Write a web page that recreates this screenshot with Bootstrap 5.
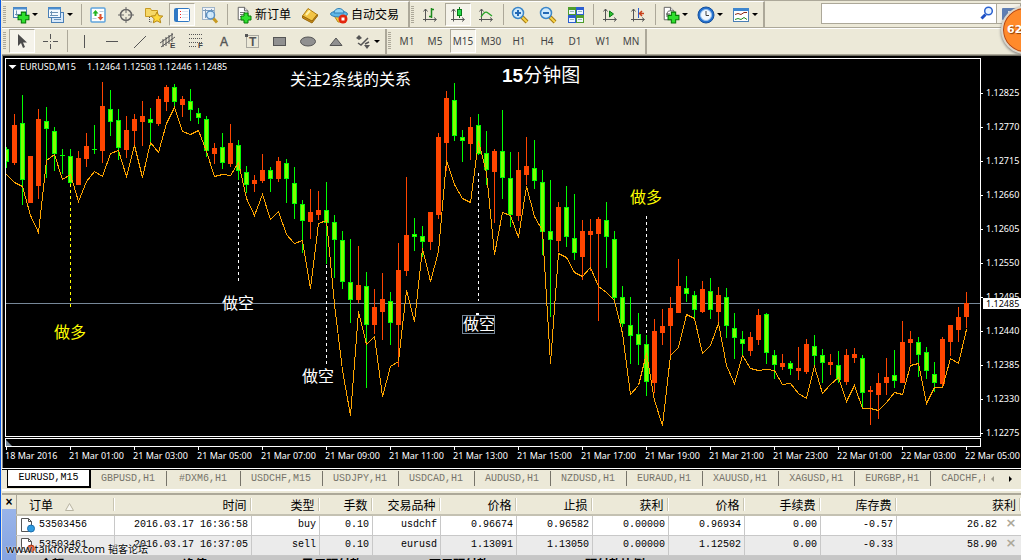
<!DOCTYPE html>
<html lang="zh-CN">
<head>
<meta charset="utf-8">
<meta name="viewport" content="width=device-width, initial-scale=1">
<title>EURUSD,M15</title>
<link rel="stylesheet" href="https://cdn.jsdelivr.net/npm/bootstrap@5.3.0/dist/css/bootstrap.min.css">
<style>
:root{--face:#ece9d8;--shade:#aca899;--cjk:"Noto Sans CJK SC";}
body{background:var(--face);border-left:1px solid #0a5ae6;padding-left:1px;color:#000;font:12px/16px "Liberation Sans",var(--cjk),sans-serif;}
button{background:none;border:0;padding:0;color:inherit;}
svg{display:block;flex:none;}
/* toolbars */
.toolrow{height:26px;}
.toolrow.first{height:28px;border-top:1px solid var(--shade);border-bottom:1px solid var(--shade);box-shadow:0 1px 0 #fff;position:relative;}
.toolgroup{border-right:2px solid var(--shade);}
.first .toolgroup{border-top:1px solid #fff;}
.grip{width:3px;margin:4px 2px 4px 1px;background:repeating-linear-gradient(#aca899 0 1px,transparent 1px 2px);}
.divide{width:1px;margin:2px 2px 2px 3px;background:var(--shade);}
.tool{width:28px;display:flex;align-items:center;justify-content:center;}
.tool.drop{width:35px;padding-left:4px;gap:2px;justify-content:flex-start;}
.tool.wide{width:auto;padding:0 5px 0 6px;gap:3px;white-space:nowrap;font-size:12px;}
.tool.drop::after{content:"";border:3px solid transparent;border-top:3px solid #000;border-bottom:0;}
.tool.down{margin:1px;width:26px;border:1px solid #fff;border-top-color:var(--shade);border-left-color:var(--shade);background:#f5f3ea;}
.frame-time{font:10px/16px "Noto Sans",sans-serif;color:#444;}
.search{height:21px;margin-top:2px;width:200px;}
.search input{width:176px;border:1px solid var(--shade);border-radius:0;padding:0 24px 0 4px;font-size:12px;min-height:0;}
.search .find{right:27px;top:3px;}
.search .chat{border:1px solid var(--shade);border-left:0;width:24px;background:#f4f2e8;}
.bubble{right:-28px;top:6px;width:48px;height:48px;border-radius:50%;background:#ff8a2b;border:2px solid #d9d5cc;box-shadow:inset 0 0 0 1px #b0471a,0 1px 3px #777;color:#fff;font:bold 11px/44px "DejaVu Sans",sans-serif;padding-left:4px;text-shadow:1px 1px 1px #8d3c00;}
/* chart */
.chartwin{background:#000;color:#fff;border-top:1px solid #716f64;border-left:1px solid #858585;padding:2px 0 0 2px;font:9px/10px "Noto Sans",sans-serif;box-shadow:0 -1px 0 var(--shade);margin-top:1px;}
.plot{height:379px;border:1px solid #fff;}
.strip{height:9px;border:1px solid #fff;margin-top:1px;}
.strip::before{content:"";display:block;width:0;border:3px solid transparent;border-left-color:#778899;border-bottom-color:#778899;margin-top:1px;}
.prices{width:40px;padding-top:30px;gap:24px;}
.prices span{display:flex;align-items:center;gap:3px;height:10px;}
.prices span::before{content:"";width:2px;height:1px;background:#fff;}
.prices .now{top:240px;left:2px;right:0;height:11px;background:#fff;color:#000;padding-left:3px;}
.prices .now::before{display:none;}
.times{height:21px;}
.times span{width:64px;flex:none;white-space:nowrap;line-height:12px;}
.times span::before{content:"";display:block;width:1px;height:3px;margin-left:1px;background:#fff;}
.candles{shape-rendering:crispEdges;}
.note{font:16px var(--cjk),sans-serif;fill:#fff;}
.headline{font-size:19px;}
.headline .digits{font-family:"Liberation Sans",sans-serif;font-weight:bold;}
/* chart tabs */
.charttabs{height:22px;border-top:1px solid #000;box-shadow:0 -1px 0 #fff;margin-top:1px;border-bottom:2px solid #fff;padding-left:5px;font:10px/16px "Liberation Mono",monospace;}
.charttabs button{height:15px;min-width:74px;padding:0 11px 0 10px;border-right:1px solid #77746a;color:#77746a;flex:none;margin-top:1px;white-space:nowrap;}
.charttabs button.active{height:19px;margin:-1px 0 0;background:#fff;color:#000;border:1px solid #000;border-width:0 2px 2px 1px;width:84px;padding:0 10px;}
.charttabs .arrow{min-width:0;padding:0 5px;border:0;width:18px;}
/* terminal */
.terminal{margin-top:2px;border-top:2px solid var(--shade);}
.side{width:14px;background:linear-gradient(#9fb9ec,#7f9fdf);}
.side button{display:block;width:14px;height:14px;background:var(--face);font:bold 12px/10px "Liberation Sans",sans-serif;}
.orders{width:100%;table-layout:fixed;border-left:1px solid var(--shade);font:10px/16px "Liberation Mono",monospace;}
.orders .c-id{width:98px}.orders .c-time{width:137px}.orders .c-68{width:68px}.orders .c-53{width:53px}.orders .c-76{width:76px}
.orders th{height:20px;padding:0 5px;font:12px/16px var(--cjk),sans-serif;text-align:right;background:linear-gradient(90deg,transparent 0 calc(100% - 2px),#c9c5b2 0 calc(100% - 1px),#fff 0) center/100% 13px no-repeat;border-bottom:2px solid #c4c1b2;}
.orders td{height:20px;padding:0 3px;text-align:right;border-right:1px solid #c8c8c8;border-bottom:1px solid #c8c8c8;background:#fff;}
.orders tr.alt td{background:#ebebeb;}
.orders th:first-child{text-align:left;padding-left:12px;}
.orders td:first-child{text-align:left;}
.orders td:last-child,.orders th:last-child{border-right:0;}
.shut{color:#aca899;font:bold 13px/12px "DejaVu Sans",sans-serif;margin-left:7px;width:14px;}
.total{background:#c6c6c6;font:bold 12px/16px var(--cjk),sans-serif;padding:0 0 0 24px;white-space:nowrap;height:18px;}
.total span{flex:none;width:127px;}
.total .t-a{width:143px}.total .t-b{width:119px}.total .t-d{width:156px}
.brandmark{left:5px;bottom:4px;font:11px/14px "Noto Sans",sans-serif;color:#000;text-shadow:0 0 1px #fff,0 0 2px #fff;}
.brandmark small{font:10px/14px var(--cjk),sans-serif;}
</style>
<script src="https://cdn.jsdelivr.net/npm/bootstrap@5.3.0/dist/js/bootstrap.bundle.min.js"></script>
</head>
<body class="vh-100 overflow-hidden position-relative">
<svg width="0" height="0" class="position-absolute" aria-hidden="true">
<defs>
<symbol id="plus" viewBox="0 0 12 12"><path d="M4 1h4v3h3v4H8v3H4V8H1V4h3z" fill="#2fe02f" stroke="#067a06"/></symbol>
<symbol id="axes" viewBox="0 0 18 18"><path d="M4.500 3v12.500M2 13.500h13M2.500 5.500l2-2.500 2 2.500M13 11.500l2.500 2-2.500 2" fill="none" stroke="#555"/></symbol>
<symbol id="lens" viewBox="0 0 18 18"><path d="M11 11l5 5" stroke="#a87a10" stroke-width="4"/><path d="M11 11l5 5" stroke="#f6d44a" stroke-width="2"/><circle cx="7" cy="7" r="5.500" fill="#cfeafc" stroke="#3b86c8" stroke-width="1.500"/></symbol>
<symbol id="sheet" viewBox="0 0 18 18"><path d="M2.500 1.500h7l4 4v10h-11z" fill="#fff" stroke="#555"/><path d="M9.500 1.500v4h4" fill="#ddd" stroke="#555"/></symbol>
</defs></svg>

<header>
<div class="toolrow first d-flex">
  <div class="toolgroup d-flex">
    <i class="grip"></i>
    <button class="tool drop" title="新图表"><svg width="18" height="18"><rect x="1.500" y="1.500" width="13" height="10" fill="#f4faff" stroke="#4a7fb5"/><path d="M1 2.500h14" stroke="#4a8fd0" stroke-width="2"/><path d="M4.500 4.500v5M3 8.500h8" stroke="#6d93b5" fill="none"/><use href="#plus" x="5" y="5" width="13" height="13"/></svg></button>
    <button class="tool drop" title="配置文件"><svg width="18" height="18"><rect x="4.500" y="6.500" width="12" height="10" fill="#d7e9fb" stroke="#4a7fb5"/><rect x="1.500" y="1.500" width="12" height="10" fill="#f4faff" stroke="#4a7fb5"/><path d="M1 2.500h13" stroke="#4a8fd0" stroke-width="2"/><path d="M3 6.500h8M4.500 5v5M3 9.500h8M7 13.500h7" stroke="#6d93b5"/></svg></button>
    <i class="divide"></i>
    <button class="tool" title="市场报价"><svg width="18" height="18"><rect x="2" y="2" width="14" height="14" rx="1" fill="#fff" stroke="#5fa4dc" stroke-width="1.500"/><path d="M3.500 7.500l3-3.500 3 3.500H7.500V10h-2V7.500z" fill="#23b423"/><path d="M8.500 11l3 3.500 3-3.500h-2V8h-2v3z" fill="#e0502a"/><path d="M10.500 5.500h4M3.500 12.500h4" stroke="#bcd"/></svg></button>
    <button class="tool" title="数据窗口"><svg width="18" height="18" fill="none" stroke="#666"><circle cx="9" cy="9" r="5.500" stroke-width="1.500"/><path d="M9 1v6M9 11v6M1 9h6M11 9h6"/></svg></button>
    <button class="tool" title="导航"><svg width="20" height="18"><path d="M1.500 2.500h5l1 2h6v6h-12z" fill="#f6d867" stroke="#c79a22"/><path d="M5.500 11v5h3" stroke="#555" stroke-dasharray="1 1" fill="none"/><path d="M13 6l1.800 3.700 4 .4-3 2.700.9 4-3.700-2-3.700 2 .9-4-3-2.700 4-.4z" fill="#ffd93b" stroke="#b58613"/></svg></button>
    <button class="tool down" title="终端"><svg width="18" height="18"><rect x="1.500" y="2.500" width="15" height="13" rx="1" fill="#fff" stroke="#2f78c4"/><path d="M3.500 3v12" stroke="#2f78c4" stroke-width="3"/><path d="M7.500 5v9" stroke="#e22" stroke-dasharray="1 2"/><path d="M9 5.500h6M9 8.500h6M9 11.500h6" stroke="#dbe6f2"/></svg></button>
    <button class="tool" title="策略测试"><svg width="18" height="18"><rect x="1.500" y="1.500" width="12" height="12" fill="#eef3f8" stroke="#9fb4c8"/><path d="M4.500 3v9M10.500 3v9M2 4.500h11" stroke="#7d9cba"/><path d="M12 12l4 4.500" stroke="#c79a22" stroke-width="3"/><circle cx="9.500" cy="9" r="4" fill="#cfeafc" fill-opacity=".9" stroke="#5b8fc0" stroke-width="1.500"/></svg></button>
    <i class="divide"></i>
    <button class="tool wide"><svg width="16" height="18"><use href="#sheet" width="16" height="16"/><path d="M4 6.500h5M4 8.500h7M4 10.500h4" stroke="#777"/><use href="#plus" x="4" y="6" width="12" height="12"/></svg>新订单</button>
    <button class="tool" title="MetaEditor"><svg width="18" height="18"><path d="M1.500 10L7 2.500l9 6-5 7z" fill="#f2c445" stroke="#b07d12"/><path d="M1.500 10v2l9.500 5 5.500-7V8.500l-5.500 6.500z" fill="#c98c18" stroke="#9a6a0c"/><path d="M5 9l4-4.500" stroke="#fff2a8" stroke-width="2"/></svg></button>
    <button class="tool wide"><svg width="18" height="18"><path d="M3 8l5 8h7l2-8z" fill="#f3c93f" stroke="#b78b18"/><ellipse cx="9" cy="8" rx="8.500" ry="3" fill="#5db6e6" stroke="#2f7fb5"/><path d="M4 7c0-6 10-6 10 0z" fill="#8fd3f5" stroke="#2f7fb5"/><circle cx="13" cy="13" r="4.500" fill="#e3260f"/><rect x="11.500" y="11.500" width="3" height="3" fill="#fff"/></svg>自动交易</button>
    <i class="ps-1"></i>
  </div>
  <div class="toolgroup d-flex">
    <i class="grip"></i>
    <button class="tool" title="柱状图"><svg width="18" height="18"><use href="#axes" width="18" height="18"/><path d="M10.500 2v10M10 3.500h3M8 10.500h3" stroke="#1d8a1d" fill="none" stroke-width="1.500"/></svg></button>
    <button class="tool down" title="阴阳烛"><svg width="18" height="18"><use href="#axes" width="18" height="18"/><path d="M10.500 1v11" stroke="#0a7a1a"/><rect x="8.500" y="3.500" width="4" height="6" fill="#27d84a" stroke="#0a7a1a"/></svg></button>
    <button class="tool" title="折线图"><svg width="18" height="18"><use href="#axes" width="18" height="18"/><path d="M4 11c3-5 5-6 7-4l4 3" stroke="#2ba52b" fill="none" stroke-width="1.300"/></svg></button>
    <i class="divide"></i>
    <button class="tool" title="放大"><svg width="18" height="18"><use href="#lens" width="18" height="18"/><path d="M4 7h6M7 4v6" stroke="#2369b5" stroke-width="2"/></svg></button>
    <button class="tool" title="缩小"><svg width="18" height="18"><use href="#lens" width="18" height="18"/><path d="M4 7h6" stroke="#2369b5" stroke-width="2"/></svg></button>
    <button class="tool" title="平铺"><svg width="18" height="18"><path d="M1 1h8v8H1z" fill="#4f9e2c"/><path d="M9 1h8v8H9z" fill="#2c5fd0"/><path d="M1 9h8v8H1z" fill="#2c5fd0"/><path d="M9 9h8v8H9z" fill="#4f9e2c"/><path d="M2 4h6v4H2zM10 4h6v4h-6zM2 12h6v4H2zM10 12h6v4h-6z" fill="#eef6ff"/><path d="M3 5.500h4M11 5.500h4M3 13.500h4M11 13.500h4" stroke="#9bb"/></svg></button>
    <i class="divide"></i>
    <button class="tool" title="自动滚动"><svg width="18" height="18"><use href="#axes" width="18" height="18"/><path d="M8.500 5l4 3-4 3z" fill="#2fc02f" stroke="#0a7a1a"/></svg></button>
    <button class="tool" title="图表平移"><svg width="18" height="18"><use href="#axes" width="18" height="18"/><path d="M9.500 2v10" stroke="#2c5fd0"/><path d="M15 7.500h-4M13 5l-2.500 2.500L13 10" stroke="#c8401a" fill="none" stroke-width="1.500"/></svg></button>
    <i class="divide"></i>
    <button class="tool drop" title="指标"><svg width="18" height="18"><use href="#sheet" width="16" height="16"/><path d="M5 11c0-6 1-6 3-6M4 8h4" stroke="#555" fill="none"/><use href="#plus" x="5" y="5" width="13" height="13"/></svg></button>
    <button class="tool drop" title="时间周期"><svg width="18" height="18"><circle cx="9" cy="9" r="8" fill="#2471cf" stroke="#15509c"/><circle cx="9" cy="9" r="5.500" fill="#f2f8ff" stroke="#9cc4ee"/><path d="M9 5v4.500h3" fill="none" stroke="#444"/></svg></button>
    <button class="tool drop" title="模板"><svg width="18" height="18"><rect x="1.500" y="2.500" width="15" height="13" fill="#fff" stroke="#4a7fb5"/><path d="M1 3.500h16" stroke="#3f87cf" stroke-width="3"/><path d="M3 8.500l3-1 3 1 3-2h3" fill="none" stroke="#8c2a16"/><path d="M3 13.500l3-1 3 1 3-2 3 2" fill="none" stroke="#1d8a1d"/></svg></button>
  </div>
  <form class="search d-flex ms-auto position-relative" onsubmit="return false">
    <input type="text" class="form-control" aria-label="搜索">
    <button class="find position-absolute" aria-label="查找"><svg width="14" height="14" fill="none"><path d="M5.500 8.500L1.500 12.500" stroke="#1d4fc4" stroke-width="3"/><circle cx="8.500" cy="5" r="3.800" fill="#eaf4ff" stroke="#2b62cf" stroke-width="1.500"/></svg></button>
    <button class="chat" aria-label="消息"><svg width="18" height="14" class="ms-1"><rect x="1" y="1" width="17" height="12" rx="1" fill="#5f7fb4"/><path d="M7.500 4v6M7 4.500h5" stroke="#e8eef8"/></svg></button>
  </form>
</div>
<div class="toolrow d-flex">
  <div class="toolgroup d-flex">
    <i class="grip"></i>
    <button class="tool down" title="光标"><svg width="18" height="18"><path d="M5 2v12l3-3 2 5 2-1-2-4.500h4z" fill="#4b4b4b"/></svg></button>
    <button class="tool" title="十字准线"><svg width="18" height="18"><path d="M9.500 2v5M9.500 12v5M2 9.500h5M12 9.500h5M9 9.500h1" stroke="#555"/></svg></button>
    <i class="divide"></i>
    <button class="tool" title="垂直线"><svg width="18" height="18"><path d="M9.500 3v13" stroke="#555"/></svg></button>
    <button class="tool" title="水平线"><svg width="18" height="18"><path d="M3 9.500h12" stroke="#555"/></svg></button>
    <button class="tool" title="趋势线"><svg width="18" height="18"><path d="M3 16L15 4" stroke="#555"/></svg></button>
    <button class="tool" title="等距通道"><svg width="18" height="20"><path d="M1 12L14 3M2 16L16 6M4 8v8M7 6v9M10 4v9M13 2v9" stroke="#555" fill="none"/><text x="11" y="17" font-size="8" font-weight="bold" fill="#444">E</text></svg></button>
    <button class="tool" title="斐波纳契"><svg width="18" height="20"><path d="M2 3.500h14M2 7.500h14M2 11.500h14M2 15.500h8" stroke="#555" stroke-dasharray="1 1"/><text x="11" y="17" font-size="8" font-weight="bold" fill="#444">F</text></svg></button>
    <button class="tool" title="文字"><svg width="18" height="18"><text x="5" y="14" font-size="12" fill="#555" stroke="#555" stroke-width=".4">A</text></svg></button>
    <button class="tool" title="文字标签"><svg width="18" height="18"><rect x="3.500" y="3.500" width="12" height="12" fill="none" stroke="#666" stroke-dasharray="1 1"/><path d="M2 2h3v3H2z" fill="#555"/><text x="6" y="14" font-size="12" font-weight="bold" fill="#555">T</text></svg></button>
    <button class="tool" title="矩形"><svg width="18" height="18"><rect x="2.500" y="5.500" width="12" height="8" fill="#909090" stroke="#555"/></svg></button>
    <button class="tool" title="椭圆"><svg width="18" height="18"><ellipse cx="9" cy="9.500" rx="7.500" ry="4.500" fill="#909090" stroke="#555"/></svg></button>
    <button class="tool" title="三角形"><svg width="18" height="18"><path d="M3 13.500h12L9 6z" fill="#909090" stroke="#555"/></svg></button>
    <button class="tool drop" title="箭头"><svg width="18" height="18"><path d="M2 6l3-3 3 3-3 2zM10 13h6l-3 4z" fill="#555"/><path d="M4 11l3 2 7-7M11 12l4-2" stroke="#555" fill="none" stroke-width="1.500"/></svg></button>
  </div>
  <div class="toolgroup frame-time d-flex">
    <i class="grip"></i>
    <button class="tool">M1</button><button class="tool">M5</button><button class="tool down">M15</button><button class="tool">M30</button><button class="tool">H1</button><button class="tool">H4</button><button class="tool">D1</button><button class="tool">W1</button><button class="tool">MN</button>
  </div>
</div>
</header>
<div class="bubble position-absolute">62</div>

<main class="chartwin">
  <div class="d-flex">
    <div class="flex-fill overflow-hidden">
      <div class="plot"><svg class="w-100 h-100">
        <g transform="translate(-6 -59)">
          <path d="M6 303.500H2000" stroke="#778899"/>
          <g id="candles" class="candles"></g>
          <g stroke-dasharray="3 3" class="candles"><path d="M70.500 184V309" stroke="#ff0"/><path d="M238.500 182V284M326.500 265V364M478.500 173V301M646.500 216V335" stroke="#fff"/></g>
          <path d="M8.500 65h8l-4 4z" fill="#fff"/>
          <g fill="#fff"><text x="20" y="70">EURUSD,M15</text><text x="87" y="70">1.12464 1.12503 1.12446 1.12485</text></g>
          <g class="note">
            <text x="290" y="85">关注2条线的关系</text>
            <text x="502" y="82" class="headline"><tspan class="digits">15</tspan>分钟图</text>
            <text x="54" y="338" fill="#ff0">做多</text><text x="222" y="309">做空</text><text x="302" y="382">做空</text><text x="463" y="330">做空</text><text x="630" y="203" fill="#ff0">做多</text>
          </g>
          <rect x="462.500" y="315.500" width="32" height="18" fill="none" stroke="#778899"/><path d="M476 313h3v2h-3z" fill="#fff"/>
        </g></svg></div>
      <div class="strip"></div>
    </div>
    <div class="prices position-relative d-flex flex-column">
      <span>1.12825</span><span>1.12770</span><span>1.12715</span><span>1.12660</span><span>1.12605</span><span>1.12550</span><span>1.12495</span><span>1.12440</span><span>1.12385</span><span>1.12330</span><span>1.12275</span>
      <span class="now position-absolute">1.12485</span>
    </div>
  </div>
  <div class="times d-flex overflow-hidden"><span>18 Mar 2016</span><span>21 Mar 01:00</span><span>21 Mar 03:00</span><span>21 Mar 05:00</span><span>21 Mar 07:00</span><span>21 Mar 09:00</span><span>21 Mar 11:00</span><span>21 Mar 13:00</span><span>21 Mar 15:00</span><span>21 Mar 17:00</span><span>21 Mar 19:00</span><span>21 Mar 21:00</span><span>21 Mar 23:00</span><span>22 Mar 01:00</span><span>22 Mar 03:00</span><span>22 Mar 05:00</span></div>
</main>

<nav class="charttabs d-flex">
  <div class="d-flex overflow-hidden flex-fill">
  <button class="active">EURUSD,M15</button><button>GBPUSD,H1</button><button>#DXM6,H1</button><button>USDCHF,M15</button><button>USDJPY,H1</button><button>USDCAD,H1</button><button>AUDUSD,H1</button><button>NZDUSD,H1</button><button>EURAUD,H1</button><button>XAUUSD,H1</button><button>XAGUSD,H1</button><button>EURGBP,H1</button><button>CADCHF,H1</button></div>
  <button class="arrow" aria-label="向左"><svg width="5" height="8"><path d="M4 1v6L1 4z" fill="#9d9a8b"/></svg></button><button class="arrow" aria-label="向右"><svg width="5" height="8"><path d="M1 1v6l3-3z" fill="#000"/></svg></button>
</nav>

<section class="terminal d-flex">
  <div class="side flex-shrink-0"><button aria-label="关闭">×</button></div>
  <div class="flex-fill">
    <table class="orders">
      <colgroup><col class="c-id"><col class="c-time"><col class="c-68"><col class="c-53"><col class="c-68"><col class="c-76"><col class="c-76"><col class="c-76"><col class="c-76"><col class="c-76"><col class="c-76"><col></colgroup>
      <thead><tr><th>订单<svg class="d-inline-block ms-2" width="16" height="9"><path d="M4.500 8.500l4-7 4 7z" fill="#f8f7f0" stroke="#b8b4a2"/></svg></th><th>时间</th><th>类型</th><th>手数</th><th>交易品种</th><th>价格</th><th>止损</th><th>获利</th><th>价格</th><th>手续费</th><th>库存费</th><th>获利</th></tr></thead>
      <tbody>
      <tr><td><div class="d-flex align-items-center gap-1"><svg width="15" height="16"><path d="M1.500 1.500h7l3 3v10h-10z" fill="#fff" stroke="#555"/><path d="M8.500 1.500v3h3" fill="none" stroke="#555"/><circle cx="11" cy="11.500" r="3.500" fill="#2f9be0" stroke="#1b6fae"/></svg>53503456</div></td><td>2016.03.17 16:36:58</td><td>buy</td><td>0.10</td><td>usdchf</td><td>0.96674</td><td>0.96582</td><td>0.00000</td><td>0.96934</td><td>0.00</td><td>-0.57</td><td>26.82<button class="shut" aria-label="平仓">×</button></td></tr>
      <tr class="alt"><td><div class="d-flex align-items-center gap-1"><svg width="15" height="16"><path d="M1.500 1.500h7l3 3v10h-10z" fill="#fff" stroke="#555"/><path d="M8.500 1.500v3h3" fill="none" stroke="#555"/><circle cx="11" cy="11.500" r="3.500" fill="#e2502c" stroke="#a8330f"/></svg>53503461</div></td><td>2016.03.17 16:37:05</td><td>sell</td><td>0.10</td><td>eurusd</td><td>1.13091</td><td>1.13050</td><td>0.00000</td><td>1.12502</td><td>0.00</td><td>-0.33</td><td>58.90<button class="shut" aria-label="平仓">×</button></td></tr>
      </tbody>
    </table>
    <div class="total d-flex"><span class="t-a">余额:</span><span class="t-b">净值:</span><span>已用预付款:</span><span class="t-d">可用预付款:</span><span>预付款比例:</span></div>
  </div>
</section>
<div class="brandmark position-absolute">www.talkforex.com <small>韬客论坛</small></div>

<script>
// One bar every 8px: direction, high, body top, body bottom, low.
const bars = `G147 149 162 168|R114 125 163 165|G95 123 180 205|R156 156 203 203|R109 119 186 199|G107 121 129 178|G127 131 154 171|G149 155 156 174|G149 156 183 187|R151 158 185 185|R133 146 159 167|G125 149 150 154|R82 106 151 163|G90 109 122 136|G109 120 148 160|R116 130 150 158|R114 119 131 145|R101 116 122 146|G108 119 123 146|R96 99 124 126|R85 87 102 111|G84 87 102 107|R96 99 105 117|G89 101 110 121|G108 113 118 124|G116 119 151 157|R143 148 154 164|G133 147 163 169|R124 143 164 167|G140 145 171 180|G166 172 185 193|R175 180 184 192|R154 170 181 183|G167 170 179 192|R157 161 179 182|G159 163 179 203|G167 183 204 219|G200 204 221 253|R189 212 222 239|R191 210 215 220|G182 210 223 264|G215 222 240 278|G231 240 282 289|G239 282 300 323|R246 285 300 303|G272 286 325 388|R289 307 325 334|R273 299 312 340|G292 301 323 345|R243 270 325 367|R177 235 271 276|G218 234 237 251|G226 236 242 257|R212 212 242 250|R133 137 215 219|R91 98 143 171|G83 100 136 141|G130 137 141 162|R117 127 144 160|G114 125 154 155|G131 153 170 185|R149 151 172 223|G110 151 178 199|G152 178 215 227|R152 170 216 221|R137 166 175 185|G140 168 181 189|G170 182 232 255|G180 231 240 317|R202 207 241 252|G186 207 237 247|G194 238 253 260|R220 231 257 280|R219 231 235 271|R217 219 234 321|G202 220 237 268|G231 239 298 300|G286 297 324 327|G297 325 336 364|G313 334 345 365|G335 344 382 396|R319 331 383 393|R309 326 333 345|R297 308 326 355|R259 286 313 313|G276 288 294 302|G291 295 310 318|R281 289 312 313|G278 291 310 319|R287 295 312 324|G288 297 326 338|G313 328 338 359|G331 339 344 355|R332 337 351 356|R309 315 340 345|G313 314 353 364|G350 355 365 379|R354 363 367 370|G361 363 369 375|R347 368 371 380|R339 344 372 374|G335 346 356 365|G349 355 363 383|R354 362 365 375|G351 365 380 383|R349 355 382 385|R348 354 358 363|G355 358 393 407|R386 390 392 425|R373 383 395 419|R358 377 383 395|G350 375 381 388|R321 342 383 383|R331 339 343 364|G337 342 355 377|G347 352 371 379|G362 374 383 392|R337 339 384 387|R325 325 342 356|R307 317 330 342|R292 303 317 328`.split('|');
const line = [174,182,186,215,232,160,154,179,174,201,181,171,176,153,150,176,145,177,142,152,123,107,131,134,130,151,176,174,175,162,198,215,194,219,211,234,243,240,288,223,220,304,370,415,311,344,336,396,366,361,290,321,248,281,251,160,184,198,202,141,172,254,212,215,237,186,216,230,363,253,257,272,276,267,286,292,300,333,394,385,353,400,425,355,347,314,318,353,345,323,365,383,355,368,370,369,370,384,383,393,398,366,393,384,377,401,385,408,408,410,402,392,394,365,363,403,387,387,358,363,329];
let out = '';
bars.forEach((b, i) => {
  const x = 6 + 8 * i, up = b[0] === 'R', [h, t, o, l] = b.slice(1).split(' ').map(Number);
  const c = up ? '#ff4500' : '#00ff00';
  out += `<rect x="${x}" y="${h}" width="1" height="${l - h}" fill="${c}"/><rect x="${x - 2}" y="${t}" width="5" height="${o - t}" fill="${c}"/>`;
  if (!up && o - t > 2) out += `<rect x="${x - 1}" y="${t + 1}" width="3" height="${o - t - 2}" fill="#7fff00"/>`;
});
out += `<polyline fill="none" stroke="#ffa500" points="${line.map((y, i) => `${6.5 + 8 * i},${y + .5}`).join(' ')}"/>`;
document.getElementById('candles').innerHTML = out;
</script>
</body>
</html>
